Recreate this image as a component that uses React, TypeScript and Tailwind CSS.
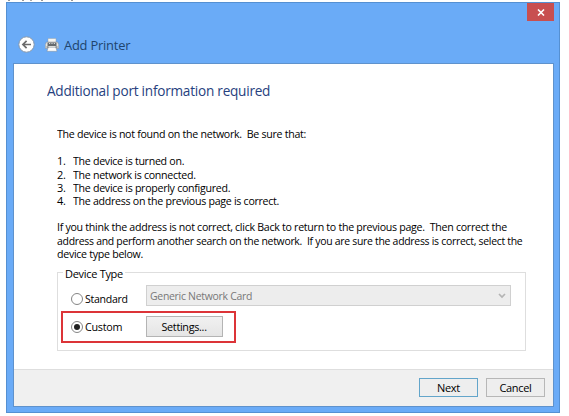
import type { ReactNode } from "react";

const steps = [
  "The device is turned on.",
  "The network is connected.",
  "The device is properly configured.",
  "The address on the previous page is correct.",
];

function Line({ children, scale = "scale-x-[.967]" }: { children: ReactNode; scale?: string }) {
  return <div className={`h-[13.2px] w-fit origin-left whitespace-pre leading-[13.2px] ${scale}`}>{children}</div>;
}

function BackIcon() {
  return (
    <svg className="h-[17px] w-[17px]" viewBox="0 0 17 17" fill="none">
      <circle cx="8.5" cy="8.5" r="7.7" fill="#fff" stroke="#8797aa" strokeWidth="1" />
      <path d="M13 8.5H5M8.6 4.8 4.9 8.5l3.7 3.7" stroke="#6c6c6c" strokeWidth="1.7" />
    </svg>
  );
}

function PrinterIcon() {
  return (
    <svg className="h-[14px] w-[14px]" viewBox="0 0 14 14">
      <path d="M3 .5h8v4H3z" fill="#f7f7f3" stroke="#98a2ab" strokeWidth=".5" />
      <path d="M1.5 4h11l1.2 2.5v4H.3v-4z" fill="#e4e5e2" stroke="#838b92" strokeWidth=".5" />
      <path d="M2.5 4.5h9V8h-9z" fill="#666b6e" />
      <path d="M4 5.5h1.2M6.4 5.5h1.2M8.8 5.5H10" stroke="#d2d7da" strokeWidth="1" />
      <path d="M3.2 9.3h7.6l1.2 4H2z" fill="#fcfcfc" stroke="#858d94" strokeWidth=".5" />
      <path d="M1.5 9h2M10.5 9h2" stroke="#4f565b" strokeWidth="1" />
    </svg>
  );
}

function Radio({ checked = false }: { checked?: boolean }) {
  return (
    <span className="flex h-[12px] w-[12px] shrink-0 items-center justify-center rounded-full border border-[#858585] bg-white">
      {checked && <span className="h-[6px] w-[6px] rounded-full bg-[#202020]" />}
    </span>
  );
}

export default function App() {
  return (
    <div className="h-[416px] w-[569px] overflow-hidden bg-white pl-[6px] font-['Open_Sans','Noto_Sans',sans-serif] text-[11px] tracking-[-0.3px] text-black">
      <div className="flex h-[2px] items-start pl-[2px]">
        <i className="h-px w-[2px] bg-[#999]" />
        <i className="ml-[12px] h-px w-[2px] bg-[#999]" />
        <i className="ml-[6px] h-px w-[2px] bg-[#aaa]" />
        <i className="ml-[9px] h-px w-[2px] bg-[#999]" />
        <i className="ml-[28px] h-px w-[2px] bg-[#999]" />
      </div>
      <div className="flex h-[411px] w-[554px] flex-col border border-[#5590d2] bg-[#6aabf7] pb-[5px] pl-[6px] pr-[5px]">
        <header className="flex h-[60px] shrink-0">
          <div className="flex grow items-center pl-[5px] pt-[23px]">
            <BackIcon />
            <div className="ml-[10px]"><PrinterIcon /></div>
            <h1 className="ml-[5px] origin-left scale-x-[.97] whitespace-nowrap text-[13.3px] leading-4 tracking-[-0.22px] text-[#20446e]">Add Printer</h1>
          </div>
          <button className="flex h-[18px] w-[27px] items-center justify-center bg-[#c84f50]">
            <svg className="h-[7px] w-[8px]" viewBox="0 0 8 7"><path d="m1 .5 6 6m0-6-6 6" stroke="#fff" strokeWidth="1.6" /></svg>
          </button>
        </header>
        <main className="flex min-h-0 grow flex-col border border-[#5f92cc] bg-white">
          <div className="flex grow flex-col pl-[43px] pt-[17px]">
            <h2 className="-ml-[10px] w-fit origin-left scale-x-[.972] whitespace-nowrap text-[14px] leading-[20px] tracking-[-0.25px] text-[#26417e]">Additional port information required</h2>
            <div className="mt-[26.4px]"><Line>{"The device is not found on the network.  Be sure that:"}</Line></div>
            <ol className="mt-[13.8px]">
              {steps.map((s, i) => (
                <li key={s} className="flex"><span className="w-[16px] leading-[13.2px]">{i + 1}.</span><Line>{s}</Line></li>
              ))}
            </ol>
            <div className="mt-[13.2px]">
              <Line>{"If you think the address is not correct, click Back to return to the previous page.  Then correct the"}</Line>
              <Line scale="scale-x-[.95]">{"address and perform another search on the network.  If you are sure the address is correct, select the"}</Line>
              <Line>device type below.</Line>
            </div>
            <section className="mt-[12px] h-[79px] w-[469px] border border-[#dedede]">
              <h3 className="-mt-[6px] ml-[5px] h-[14px] w-fit origin-left bg-white px-[2px] leading-[14px]">Device Type</h3>
              <div className="mt-[5px] flex h-[20px] items-center pl-[13px]">
                <div className="flex items-center pt-[7px]">
                  <Radio />
                  <span className="ml-[2px] w-[61px] origin-left scale-x-[.96] leading-[14px]">Standard</span>
                </div>
                <div className="flex h-[21px] w-[365px] shrink-0 items-center justify-between border border-[#d0d0d0] bg-[#ededed] pl-[3px] pr-[4px] text-[#787878]">
                  <span className="origin-left scale-x-[.95]">Generic Network Card</span>
                  <svg className="h-[6px] w-[8px]" viewBox="0 0 8 6"><path d="m1 1 3 3 3-3" fill="none" stroke="#b4b4b4" strokeWidth="1.7" /></svg>
                </div>
              </div>
              <div className="ml-[3px] mt-[5px] flex h-[32px] w-[175px] items-center border-2 border-[#dc3438] pl-[8px]">
                <Radio checked />
                <span className="ml-[2px] w-[61px] shrink-0 origin-left scale-x-[.98]">Custom</span>
                <button className="h-[21px] w-[77px] shrink-0 border border-[#b4b4b4] bg-linear-to-b from-[#f1f1f1] to-[#e5e5e5]"><span className="inline-block scale-x-[.98]">Settings...</span></button>
              </div>
            </section>
          </div>
          <footer className="flex h-[37px] shrink-0 items-start justify-end gap-[8px] border-t border-[#dedede] bg-[#f0f0f0] pr-[8px] pt-[8px]">
            <button className="h-[19px] w-[59px] border border-[#63a5ca] bg-[#eee] leading-[17px]">Next</button>
            <button className="h-[19px] w-[59px] border border-[#b7b7b7] bg-[#eee] leading-[17px]">Cancel</button>
          </footer>
        </main>
      </div>
    </div>
  );
}
